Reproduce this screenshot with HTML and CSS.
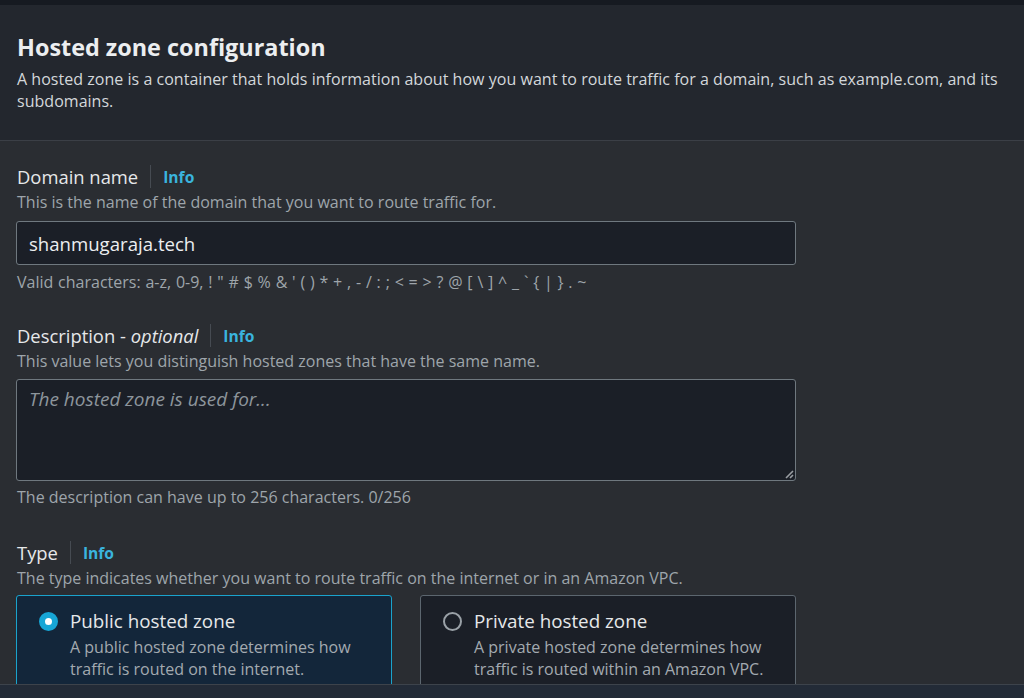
FILE: index.html
```html
<!DOCTYPE html>
<html>
<head>
<meta charset="utf-8">
<link rel="stylesheet" href="styles.css">
</head>
<body>
<div class="topstrip"></div>
<div class="panel">
  <header class="panel-header">
    <h2 class="title">Hosted zone configuration</h2>
    <p class="subtitle">A hosted zone is a container that holds information about how you want to route traffic for a domain, such as example.com, and its subdomains.</p>
  </header>
  <div class="panel-body">
    <div class="field field-domain">
      <div class="label-row"><span class="label">Domain name</span><span class="sep"></span><span class="info">Info</span></div>
      <div class="help">This is the name of the domain that you want to route traffic for.</div>
      <div class="input">shanmugaraja.tech</div>
      <div class="constraint chars">Valid characters: a-z, 0-9, ! " # $ % &amp; ' ( ) * + , - / : ; &lt; = &gt; ? @ [ \ ] ^ _ ` { | } . ~</div>
    </div>
    <div class="field field-desc">
      <div class="label-row"><span class="label">Description - <i>optional</i></span><span class="sep"></span><span class="info">Info</span></div>
      <div class="help">This value lets you distinguish hosted zones that have the same name.</div>
      <div class="textarea"><span class="placeholder">The hosted zone is used for...</span>
        <svg class="grip" width="10" height="10" viewBox="0 0 10 10"><path d="M9 2 L2 9 M9 6 L6 9" stroke="#9a9ea3" stroke-width="1.6" fill="none"/></svg>
      </div>
      <div class="constraint">The description can have up to 256 characters. 0/256</div>
    </div>
    <div class="field">
      <div class="label-row"><span class="label">Type</span><span class="sep"></span><span class="info">Info</span></div>
      <div class="help">The type indicates whether you want to route traffic on the internet or in an Amazon VPC.</div>
      <div class="tiles">
        <div class="tile selected">
          <span class="radio on"></span>
          <div class="tile-text">
            <div class="tile-title">Public hosted zone</div>
            <div class="tile-desc">A public hosted zone determines how traffic is routed on the internet.</div>
          </div>
        </div>
        <div class="tile">
          <span class="radio"></span>
          <div class="tile-text">
            <div class="tile-title">Private hosted zone</div>
            <div class="tile-desc">A private hosted zone determines how traffic is routed within an Amazon VPC.</div>
          </div>
        </div>
      </div>
    </div>
  </div>
</div>
<div class="bottomstrip"></div>
</body>
</html>
```
FILE: styles.css
```css
* { box-sizing: border-box; }
html, body { margin: 0; padding: 0; }
body {
  width: 1024px;
  height: 698px;
  overflow: hidden;
  background: #2a2d32;
  font-family: "Open Sans", "Noto Sans", sans-serif;
  color: #d5d9dd;
  position: relative;
}
.topstrip { height: 5px; background: #161a21; }
.panel-header {
  background: #23272e;
  padding: 27px 17px 0 17px;
  height: 136px;
  border-bottom: 1px solid #3b3f46;
}
.title {
  margin: 0;
  font-size: 23.4px;
  font-weight: 700;
  line-height: 30px;
  color: #eceef0;
}
.subtitle {
  margin: 6px 0 0 0;
  font-size: 16px;
  line-height: 22px;
  color: #d3d7db;
  letter-spacing: 0.03px;
}
.panel-body {
  padding: 21px 0 0 16px;
  width: 796px;
}
.field-domain { margin-bottom: 28px; }
.field-desc { margin-bottom: 30px; }
.label-row {
  display: flex;
  align-items: center;
  height: 29px;
  padding-left: 1px;
}
.label {
  font-size: 18.4px;
  color: #e6e8ea;
}
.label i { font-style: italic; }
.sep {
  width: 1px;
  height: 23px;
  background: #464b52;
  margin: 0 12px 0 12px;
}
.info {
  font-size: 15.6px;
  font-weight: 700;
  color: #3ab4de;
}
.help {
  font-size: 16px;
  line-height: 22px;
  color: #9ea5ab;
  padding-left: 1px;
}
.input {
  margin-top: 8px;
  height: 44px;
  background: #1b1f27;
  border: 1px solid #6f787f;
  border-radius: 3px;
  padding: 0 12px;
  display: flex;
  align-items: center;
  font-size: 18.6px;
  color: #eceef0;
}
.constraint {
  margin-top: 5px;
  font-size: 16px;
  line-height: 22px;
  color: #9ea5ab;
  padding-left: 1px;
}
.constraint.chars {
  margin-top: 6px;
  word-spacing: 0.65px;
}
.textarea {
  position: relative;
  margin-top: 7px;
  height: 102px;
  background: #1b1f27;
  border: 1px solid #6f787f;
  border-radius: 3px;
  padding: 6px 12px;
}
.placeholder {
  font-size: 19px;
  font-style: italic;
  color: #8d959c;
}
.grip { position: absolute; right: 1px; bottom: 1px; }
.tiles {
  display: grid;
  grid-template-columns: 376px 376px;
  column-gap: 28px;
  margin-top: 6px;
}
.tile {
  display: flex;
  gap: 12px;
  background: #1b1f27;
  border: 1px solid #5c666f;
  border-radius: 3px;
  padding: 12px 18px 0 22px;
  height: 100px;
}
.tile.selected {
  background: #13263a;
  border-color: #1aa3cc;
}
.radio {
  flex: none;
  width: 19px;
  height: 19px;
  border-radius: 50%;
  border: 2px solid #9aa1a7;
  margin-top: 4px;
}
.radio.on {
  border: 6px solid #17a6d6;
  background: #ffffff;
}
.tile-title {
  font-size: 18.8px;
  line-height: 26px;
  color: #e6e8ea;
}
.tile-desc {
  font-size: 16px;
  line-height: 22px;
  color: #a3aab0;
  margin-top: 2px;
}
.bottomstrip {
  position: absolute;
  left: 0;
  right: 0;
  bottom: 0;
  height: 14px;
  background: #232b37;
  border-top: 1px solid #3d434b;
}
```
